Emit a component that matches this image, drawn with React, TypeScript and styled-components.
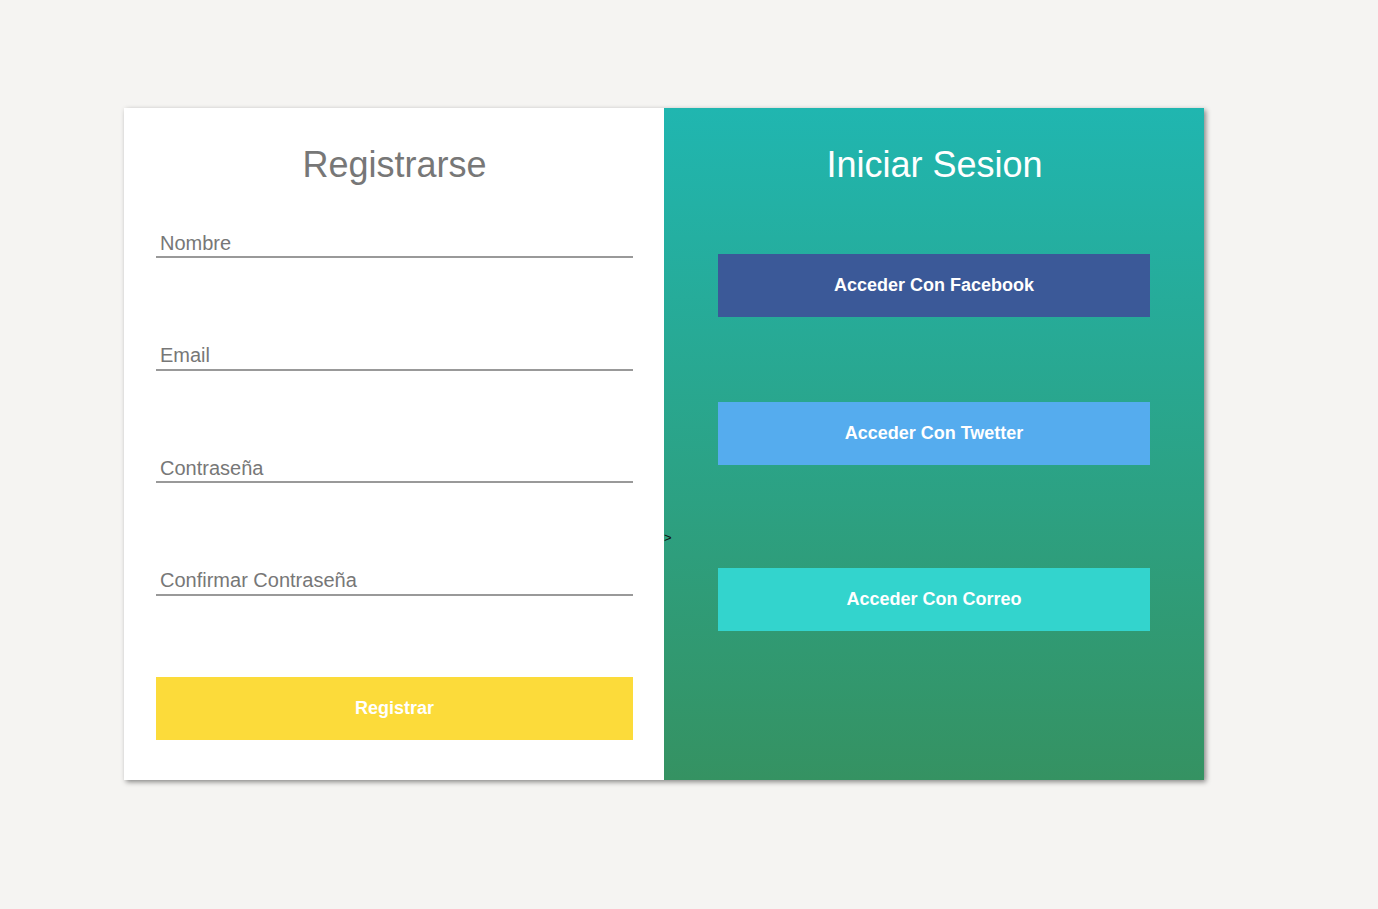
import React from "react";
import styled, { createGlobalStyle } from "styled-components";

const Global = createGlobalStyle`
  html, body {
    margin: 0;
    padding: 0;
    background: #f5f4f2;
    font-family: "Liberation Sans", Arial, sans-serif;
  }
`;

const Page = styled.div`
  padding: 108px 0 0 124px;
  min-height: 909px;
  box-sizing: border-box;
`;

const Card = styled.div`
  position: relative;
  display: flex;
  width: 1080px;
  height: 672px;
  box-shadow: 2px 2px 5px rgba(0, 0, 0, 0.45);
`;

const Panel = styled.section<{ $variant: "light" | "dark" }>`
  flex: 0 0 540px;
  box-sizing: border-box;
  display: flex;
  flex-direction: column;
  padding: 37px 31px 40px 32px;
  background: ${(p) =>
    p.$variant === "light"
      ? "#ffffff"
      : "linear-gradient(to bottom, #20b6b0 0%, #359262 100%)"};
`;

const Title = styled.h1<{ $light?: boolean }>`
  margin: 0;
  font-family: "Liberation Sans", Arial, sans-serif;
  font-weight: 400;
  font-size: 36px;
  line-height: 40px;
  text-align: center;
  color: ${(p) => (p.$light ? "#ffffff" : "#777777")};
`;

const Form = styled.form`
  display: flex;
  flex-direction: column;
  gap: 84.67px;
  margin-top: 45px;
`;

const Field = styled.input`
  box-sizing: border-box;
  width: 100%;
  height: 28px;
  padding: 0 4px;
  border: none;
  border-bottom: 2px solid #999999;
  outline: none;
  background: transparent;
  font-family: "Liberation Sans", Arial, sans-serif;
  font-size: 20px;
  color: #555;
  &::placeholder {
    color: #777777;
    opacity: 1;
  }
`;

const ActionButton = styled.button<{ $bg: string; $mt: number; $inset?: boolean }>`
  box-sizing: border-box;
  height: 63px;
  flex: 0 0 63px;
  margin-top: ${(p) => p.$mt}px;
  ${(p) => (p.$inset ? "margin-left: 22px; margin-right: 23px;" : "")}
  border: none;
  background: ${(p) => p.$bg};
  color: #ffffff;
  font-family: "Liberation Sans", Arial, sans-serif;
  font-weight: 700;
  font-size: 18px;
  cursor: pointer;
`;

const Stray = styled.span`
  position: absolute;
  left: 540px;
  top: 422px;
  font-family: "Liberation Sans", Arial, sans-serif;
  font-size: 13px;
  color: #111;
`;

export default function App() {
  return (
    <>
      <Global />
      <Page>
        <Card>
          <Panel $variant="light">
            <Title>Registrarse</Title>
            <Form onSubmit={(e) => e.preventDefault()}>
              <Field type="text" placeholder="Nombre" />
              <Field type="email" placeholder="Email" />
              <Field type="password" placeholder="Contraseña" />
              <Field type="password" placeholder="Confirmar Contraseña" />
            </Form>
            <ActionButton $bg="#fcdb3a" $mt={81}>
              Registrar
            </ActionButton>
          </Panel>
          <Stray>&gt;</Stray>
          <Panel $variant="dark">
            <Title $light>Iniciar Sesion</Title>
            <ActionButton $bg="#3b5998" $mt={69} $inset>
              Acceder Con Facebook
            </ActionButton>
            <ActionButton $bg="#55acee" $mt={85} $inset>
              Acceder Con Twetter
            </ActionButton>
            <ActionButton $bg="#33d4cd" $mt={103} $inset>
              Acceder Con Correo
            </ActionButton>
          </Panel>
        </Card>
      </Page>
    </>
  );
}
